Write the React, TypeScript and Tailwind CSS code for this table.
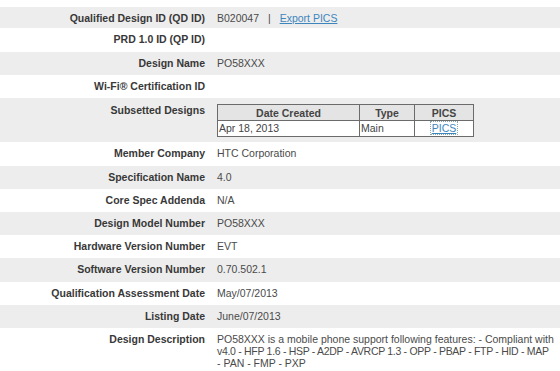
import React from 'react';

type Row = { label: string; value?: React.ReactNode; h: string };

const rows: Row[] = [
  {
    label: 'Qualified Design ID (QD ID)',
    h: 'h-[21px]',
    value: (
      <span>
        B020047 <span className="mx-[6px]">|</span>{' '}
        <a href="#" className="text-[#3d86bd] underline">Export PICS</a>
      </span>
    ),
  },
  { label: 'PRD 1.0 ID (QP ID)', h: 'h-[24px]' },
  { label: 'Design Name', value: 'PO58XXX', h: 'h-[23px]' },
  { label: 'Wi-Fi® Certification ID', h: 'h-[23px]' },
  { label: 'Subsetted Designs', value: 'TABLE', h: 'h-[44px]' },
  { label: 'Member Company', value: 'HTC Corporation', h: 'h-[24px]' },
  { label: 'Specification Name', value: '4.0', h: 'h-[23px]' },
  { label: 'Core Spec Addenda', value: 'N/A', h: 'h-[23px]' },
  { label: 'Design Model Number', value: 'PO58XXX', h: 'h-[23px]' },
  { label: 'Hardware Version Number', value: 'EVT', h: 'h-[23px]' },
  { label: 'Software Version Number', value: '0.70.502.1', h: 'h-[24px]' },
  { label: 'Qualification Assessment Date', value: 'May/07/2013', h: 'h-[23px]' },
  { label: 'Listing Date', value: 'June/07/2013', h: 'h-[23px]' },
  {
    label: 'Design Description',
    h: 'h-[46px]',
    value: (
      <>
        <span className="whitespace-nowrap">PO58XXX is a mobile phone support following features: - Compliant with</span>
        <br />
        <span className="whitespace-nowrap tracking-[-0.3px]">v4.0 - HFP 1.6 - HSP - A2DP - AVRCP 1.3 - OPP - PBAP - FTP - HID - MAP</span>
        <br />
        <span className="whitespace-nowrap">- PAN - FMP - PXP</span>
      </>
    ),
  },
];

const SubsetTable: React.FC = () => (
  <div className="w-[257px] border border-[#6b6b6b] grid grid-cols-[142px_55px_1fr] text-[#444]">
    <div className="h-[16px] bg-[#e4e4e4] border-r border-b border-[#6b6b6b] text-center font-bold leading-[16px]">Date Created</div>
    <div className="h-[16px] bg-[#e4e4e4] border-r border-b border-[#6b6b6b] text-center font-bold leading-[16px]">Type</div>
    <div className="h-[16px] bg-[#e4e4e4] border-b border-[#6b6b6b] text-center font-bold leading-[16px]">PICS</div>
    <div className="h-[15px] bg-white border-r border-[#6b6b6b] pl-[1px] leading-[15px]">Apr 18, 2013</div>
    <div className="h-[15px] bg-white border-r border-[#6b6b6b] pl-[1px] leading-[15px]">Main</div>
    <div className="h-[15px] bg-white text-center leading-[15px]">
      <a href="#" className="text-[#3d86bd] underline outline-1 outline-dotted outline-[#8aa] px-[1px]">PICS</a>
    </div>
  </div>
);

const App: React.FC = () => {
  return (
    <div className="w-[560px] h-[371px] overflow-hidden bg-white pt-[7px] font-['Liberation_Sans',Arial,sans-serif] text-[10.5px]">
      {rows.map((row, i) => {
        const bg = i % 2 === 0 ? 'bg-[#ededed]' : 'bg-white';
        const isTable = row.value === 'TABLE';
        return (
          <div key={row.label} className={`grid grid-cols-[212px_1fr] gap-x-px ${row.h} ${bg}`}>
            <div className={`${bg} text-right font-bold text-[#383838] pr-[7px] ${isTable ? 'pt-[6px]' : 'pt-[5px]'} leading-[12px]`}>
              {row.label}
            </div>
            <div className={`${bg} text-[#4a4a4a] pl-[4px] leading-[12px] ${isTable ? 'pt-[6px]' : 'pt-[5px]'}`}>
              {isTable ? <SubsetTable /> : row.value}
            </div>
          </div>
        );
      })}
    </div>
  );
};

export default App;
